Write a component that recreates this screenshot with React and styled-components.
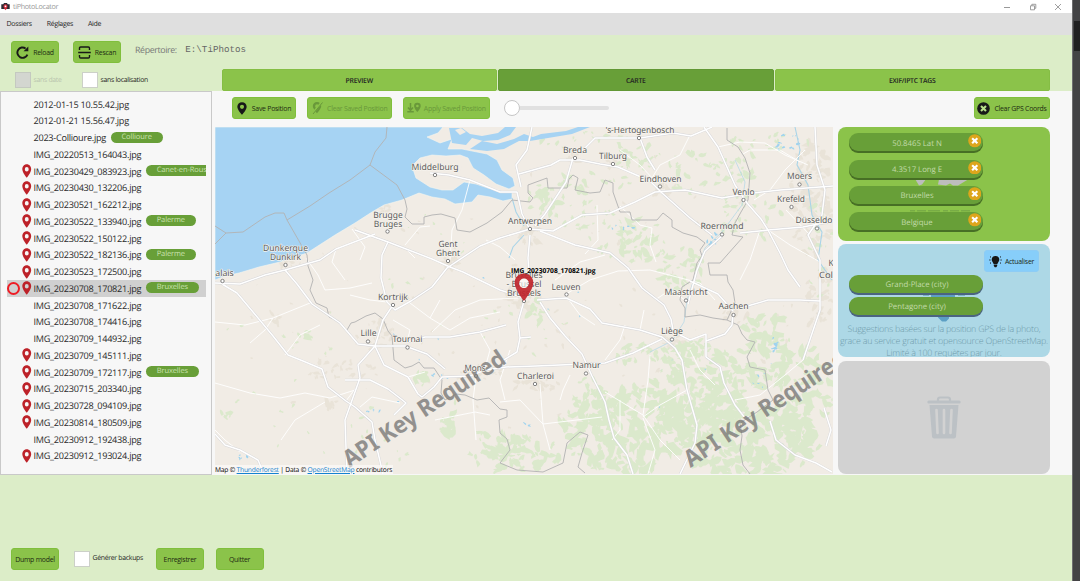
import React from 'react';
import styled, { createGlobalStyle, css } from 'styled-components';

const Global = createGlobalStyle`
  *, *::before, *::after { box-sizing: border-box; }
  html, body { margin: 0; padding: 0; overflow: hidden; }
  body {
    font-family: "Open Sans", "Noto Sans", sans-serif;
    font-size: 7px;
    color: #222;
    text-rendering: geometricPrecision;
  }
  svg { display: block; flex: none; }
`;

const Screen = styled.div`
  display: flex;
  width: 1080px;
  height: 581px;
  background: #dcedc8;
`;
const Window = styled.div`
  display: flex;
  flex-direction: column;
  width: 1072px;
`;
const Gutter = styled.div`
  width: 8px;
  padding-top: 21px;
  background: #434345;
  border-left: 1px solid #6e6e70;
`;
const Thumb = styled.div`
  height: 30px;
  margin-left: 1px;
  background: #202021;
`;

const TitleBar = styled.header`
  display: flex;
  align-items: center;
  height: 13px;
  padding: 0 10px 0 1px;
  background: #fff;
`;
const Title = styled.span`
  margin-left: 3px;
  font-size: 7.2px;
  letter-spacing: -0.32px;
  color: #999;
`;
const WindowControls = styled.div`
  display: flex;
  align-items: center;
  gap: 17.5px;
  margin-left: auto;
`;
const MenuBar = styled.nav`
  display: flex;
  align-items: center;
  gap: 15px;
  height: 22px;
  padding: 1.5px 0 0 6.5px;
  background: #dfdfdf;
  font-size: 7px;
  letter-spacing: -0.32px;
`;

const Header = styled.div`
  display: flex;
  height: 56px;
`;
const HeaderLeft = styled.div`
  width: 221.5px;
  padding: 5.5px 0 0 11px;
`;
const Row = styled.div`
  display: flex;
  align-items: center;
`;
const CheckRow = styled.div`
  display: flex;
  padding: 9px 0 0 3.5px;
`;
const Button = styled.button`
  display: flex;
  align-items: center;
  justify-content: center;
  gap: ${(p) => p.$gap || 4}px;
  flex: none;
  width: ${(p) => p.$w}px;
  height: 22.5px;
  padding: 1px 0 0;
  border: 1px solid ${(p) => (p.$blue ? '#8dccf5' : '#80bf3c')};
  border-radius: 3px;
  background: ${(p) => (p.$blue ? '#87cefa' : '#8bc34a')};
  color: ${(p) => (p.$off ? '#69983a' : '#1d2a12')};
  font: inherit;
  font-size: 6.9px;
  letter-spacing: -0.24px;
  white-space: nowrap;
`;
const Directory = styled.span`
  margin: -4px 8.5px 0 14px;
  font-size: 8.8px;
  letter-spacing: -0.36px;
  color: #777;
`;
const Path = styled.span`
  margin-top: -5px;
  font: 9.2px "Liberation Mono", monospace;
  color: #666;
  white-space: nowrap;
`;
const Check = styled.label`
  display: flex;
  align-items: center;
  gap: 3px;
  width: ${(p) => p.$w}px;
  font-size: 6.9px;
  letter-spacing: -0.3px;
  color: ${(p) => (p.$off ? '#b9c4ae' : '#222')};
  white-space: nowrap;
  &::before {
    content: '';
    width: 16px;
    height: 16px;
    border: 1px solid ${(p) => (p.$off ? '#c4c9c0' : '#ccd0c8')};
    background: ${(p) => (p.$off ? '#d3d6d0' : '#fff')};
  }
`;
const Tabs = styled.div`
  display: flex;
  align-items: flex-end;
  gap: 1px;
  width: 828.5px;
`;
const Tab = styled.div`
  display: flex;
  align-items: center;
  justify-content: center;
  flex: 1;
  height: 22.5px;
  padding-top: 1px;
  border-radius: 2px;
  background: ${(p) => (p.$active ? '#689f38' : '#8bc34a')};
  border: 1px solid ${(p) => (p.$active ? '#629835' : '#85be44')};
  font-size: 6.8px;
  letter-spacing: -0.22px;
  font-weight: 600;
`;

const Body = styled.main`
  display: flex;
  height: 384px;
  background: #f7f7f7;
`;
const FileList = styled.ul`
  width: 212px;
  margin: 0;
  padding: 3.8px 5.5px 0 6px;
  border: 1px solid #c9c9c9;
  list-style: none;
`;
const FileRow = styled.li`
  display: flex;
  align-items: center;
  height: 16.75px;
  overflow: hidden;
  font-size: 9.15px;
  letter-spacing: -0.26px;
  white-space: nowrap;
  color: #2a2a2a;
  ${(p) => p.$selected && css`background: #d0d0d0;`}
`;
const Slot = styled.span`
  display: flex;
  justify-content: center;
  flex: none;
  width: ${(p) => p.$w}px;
`;
const Ring = styled.span`
  width: 13px;
  height: 13px;
  border: 2px solid #ee1c24;
  border-radius: 50%;
`;
const Badge = styled.span`
  flex: none;
  height: 11px;
  margin: -1px 0 0 4.8px;
  padding: 0 10.7px;
  border-radius: 6px;
  background: #689f38;
  color: #cbe2b0;
  font-size: 7.5px;
  line-height: 11px;
  letter-spacing: -0.1px;
`;

const Content = styled.section`
  display: flex;
  flex-direction: column;
  width: 838px;
  padding-left: 3px;
`;
const Toolbar = styled.div`
  display: flex;
  align-items: center;
  height: 36px;
  padding: 0 0 2.5px 17px;
`;
const Spacer = styled.div`
  width: ${(p) => p.$w}px;
  flex: none;
`;
const Slider = styled.div`
  display: flex;
  align-items: center;
  width: 105px;
  margin: 0 auto 0 14px;
`;
const Knob = styled.div`
  width: 16px;
  height: 16px;
  border: 1px solid #c6c6c6;
  border-radius: 50%;
  background: #fff;
`;
const Track = styled.div`
  flex: 1;
  height: 4px;
  border-radius: 0 2px 2px 0;
  background: #e1e1e1;
`;
const Panes = styled.div`
  display: flex;
  gap: 5px;
`;
const MapPane = styled.div`
  position: relative;
  width: 618px;
  height: 347px;
  overflow: hidden;
`;
const Attribution = styled.div`
  position: absolute;
  left: 0;
  bottom: 0;
  width: 178px;
  height: 9px;
  background: rgba(255, 255, 255, 0.55);
  color: #000;
  font-size: 6.7px;
  line-height: 10.5px;
  letter-spacing: -0.21px;
  white-space: nowrap;
  u { color: #1583cf; }
`;

const Side = styled.aside`
  display: flex;
  flex-direction: column;
  gap: 3.4px;
  width: 212px;
  padding-top: 0.4px;
`;
const Card = styled.div`
  position: relative;
  display: flex;
  flex-direction: column;
  align-items: flex-start;
  height: 113.3px;
  padding: ${(p) => p.$pad || '0'};
  overflow: hidden;
  border-radius: 8px;
  background: ${(p) => p.$bg};
`;
const Backdrop = styled.div`
  position: absolute;
  left: 0;
  top: 0;
`;
const Suggest = styled.div`
  width: 100%;
  padding-left: 11px;
`;
const SuggestTop = styled.div`
  display: flex;
  justify-content: flex-end;
  padding: 0 11px 2.5px 0;
`;
const Chip = styled.div`
  position: relative;
  display: flex;
  align-items: center;
  justify-content: center;
  flex: none;
  width: 134px;
  height: 18px;
  padding: 2.5px 0 0 2px;
  margin-bottom: ${(p) => p.$mb}px;
  border-radius: 9px;
  background: #689f38;
  box-shadow: 0 2px 0 ${(p) => p.$shade};
  color: #c2dbaa;
  font-size: 7.8px;
  letter-spacing: -0.03px;
`;
const Close = styled.span`
  position: absolute;
  right: 2px;
  top: 1px;
`;
const Hint = styled.p`
  width: 212px;
  margin: 4px 0 0;
  text-align: center;
  font-size: 8.9px;
  font-weight: 300;
  line-height: 12px;
  letter-spacing: -0.24px;
  color: #6f9bab;
  white-space: nowrap;
`;
const Footer = styled.footer`
  display: flex;
  align-items: center;
  height: 106px;
  padding: 61.5px 0 0 11px;
`;

const PIN = 'M12 1C7 1 3.6 4.7 3.6 9.2 3.6 15 12 23.5 12 23.5S20.4 15 20.4 9.2C20.4 4.7 17 1 12 1Zm0 4.6a3.7 3.7 0 1 1 0 7.4 3.7 3.7 0 0 1 0-7.4Z';
const Pin = ({ w = 12, h = 13, color = '#181818' }) => (
  <svg width={w} height={h} viewBox="3 0.5 18 23.5" preserveAspectRatio="none">
    <path fill={color} fillRule="evenodd" d={PIN} />
  </svg>
);
const ReloadIcon = () => (
  <svg width="13" height="13" viewBox="0 0 13 13" fill="none" stroke="#181818" strokeWidth="1.9">
    <path d="M11.4 8.6A5.2 5.2 0 1 1 9.6 2.4" />
    <path d="M7.6 5.2h4.700V.6Z" fill="#181818" stroke="none" />
  </svg>
);
const RescanIcon = () => (
  <svg width="13" height="13" viewBox="0 0 13 13" fill="none" stroke="#181818" strokeWidth="1.4">
    <path d="M1.500 4V2.200Q1.500 1 2.700 1h7.600q1.200 0 1.200 1.200V4M1.500 9v1.800q0 1.200 1.200 1.200h7.600q1.200 0 1.200-1.200V9M.2 6.500h12.600" />
  </svg>
);
const PinOff = () => (
  <svg width="12" height="14" viewBox="0 0 24 26">
    <path fill="#69983a" fillRule="evenodd" d={PIN} />
    <path d="M22 1 3 24" stroke="#8bc34a" strokeWidth="4" />
    <path d="M23 2 4 25" stroke="#69983a" strokeWidth="2" />
  </svg>
);
const ApplyIcon = () => (
  <svg width="14" height="12" viewBox="0 0 14 12">
    <path d="M3.5 1v7M1 5.500l2.500 2.800L6 5.500M.3 9.800h6.500" fill="none" stroke="#69983a" strokeWidth="1.5" />
    <path fillRule="evenodd" fill="#69983a" d="M10.400.8A3.200 3.200 0 0 0 7.100 4c0 2.500 3.300 6 3.300 6s3.300-3.500 3.300-6A3.200 3.200 0 0 0 10.400.8Zm0 1.900a1.300 1.300 0 1 1 0 2.600 1.300 1.300 0 0 1 0-2.600Z" />
  </svg>
);
const Cross = ({ size, bg, fg, w }) => (
  <svg width={size} height={size} viewBox="0 0 14 14">
    <circle cx="7" cy="7" r="6.8" fill={bg} />
    <path d="m4.300 4.300 5.400 5.400m0-5.400L4.300 9.700" stroke={fg} strokeWidth={w} />
  </svg>
);
const Bulb = () => (
  <svg width="13" height="13" viewBox="0 0 13 13">
    <path fill="#161616" d="M6.500 1a3.800 3.800 0 0 0-3.800 3.800c0 1.700 1.300 2.400 1.900 4.200h3.800c.6-1.800 1.900-2.500 1.900-4.200A3.800 3.800 0 0 0 6.500 1ZM4.800 9.500h3.400v1.400l-1 1.300H5.800l-1-1.300Z" />
    <path d="M.3 5h1.200m10 0h1.200M1 1.600l1 .7m10-.7-1 .7M1 8.400l1-.7m10 .7-1-.7" stroke="#161616" />
  </svg>
);
const CameraIcon = () => (
  <svg width="9" height="9" viewBox="0 0 9 9">
    <path d="M.3 2.300h2L3 1h3l.7 1.300h2V7H.3Z" fill="#2b2b33" />
    <path d="M4.500 2.300a2 2 0 0 0-2 2c0 1.700 2 4 2 4s2-2.300 2-4a2 2 0 0 0-2-2Z" fill="#d52b3b" />
    <circle cx="4.5" cy="4.3" r=".9" fill="#fff" />
  </svg>
);

const files = [
  ['2012-01-15 10.55.42.jpg'],
  ['2012-01-21 15.56.47.jpg'],
  ['2023-Collioure.jpg', 0, 'Collioure'],
  ['IMG_20220513_164043.jpg'],
  ['IMG_20230429_083923.jpg', 1, 'Canet-en-Roussillon'],
  ['IMG_20230430_132206.jpg', 1],
  ['IMG_20230521_162212.jpg', 1],
  ['IMG_20230522_133940.jpg', 1, 'Palerme'],
  ['IMG_20230522_150122.jpg', 1],
  ['IMG_20230522_182136.jpg', 1, 'Palerme'],
  ['IMG_20230523_172500.jpg', 1],
  ['IMG_20230708_170821.jpg', 1, 'Bruxelles', 1],
  ['IMG_20230708_171622.jpg'],
  ['IMG_20230708_174416.jpg'],
  ['IMG_20230709_144932.jpg'],
  ['IMG_20230709_145111.jpg', 1],
  ['IMG_20230709_172117.jpg', 1, 'Bruxelles'],
  ['IMG_20230715_203340.jpg', 1],
  ['IMG_20230728_094109.jpg', 1],
  ['IMG_20230814_180509.jpg', 1],
  ['IMG_20230912_192438.jpg'],
  ['IMG_20230912_193024.jpg', 1],
];

/* ---- Map drawing ---- */
const random = (seed) => () => {
  seed = (seed * 16807) % 2147483647;
  return seed / 2147483647;
};
const blobs = (groups, seed) => {
  const r = random(seed);
  let d = '';
  groups.forEach(([cx, cy, rx, ry, n, s]) => {
    for (let i = 0; i < n; i += 1) {
      const a = r() * 6.283;
      const q = Math.sqrt(r());
      const x = cx + Math.cos(a) * q * rx;
      const y = cy + Math.sin(a) * q * ry;
      const size = s * (0.35 + r());
      const tilt = r() * 3.14;
      for (let k = 0; k < 9; k += 1) {
        const t = (k / 9) * 6.283;
        const m = size * (0.5 + r() * 0.8);
        const u = Math.cos(t) * m * 1.5;
        const v = Math.sin(t) * m * 0.75;
        d += `${k ? 'L' : 'M'}${(x + u * Math.cos(tilt) - v * Math.sin(tilt)).toFixed(1)} ${(y + u * Math.sin(tilt) + v * Math.cos(tilt)).toFixed(1)}`;
      }
      d += 'Z';
    }
  });
  return d;
};
const woods = blobs([
  [545, 200, 20, 16, 26, 3], [590, 183, 40, 12, 22, 2.6], [578, 215, 40, 14, 20, 2.6], [640, 158, 25, 14, 22, 2.8],
  [700, 172, 34, 24, 30, 2.8], [590, 140, 50, 9, 16, 2.2], [642, 240, 24, 24, 34, 3.4], [680, 268, 24, 22, 34, 3],
  [610, 238, 30, 20, 18, 2.2], [742, 165, 12, 38, 24, 2.6], [765, 215, 30, 26, 16, 2.4], [770, 140, 40, 12, 14, 2],
  [730, 215, 16, 20, 16, 2.6], [625, 430, 64, 44, 210, 4.4], [700, 390, 46, 50, 190, 4.2], [750, 440, 70, 38, 190, 4.4],
  [765, 350, 26, 38, 80, 3.8], [805, 395, 28, 50, 80, 3.6], [660, 355, 50, 12, 40, 2.8], [590, 400, 20, 24, 26, 3],
  [525, 455, 34, 18, 56, 3.6], [450, 423, 9, 12, 14, 4], [423, 379, 8, 6, 12, 3.2], [536, 312, 8, 14, 10, 3],
  [490, 450, 26, 22, 20, 3], [820, 250, 14, 60, 16, 2.4], [300, 340, 80, 30, 8, 1.8], [350, 420, 130, 50, 22, 1.8],
  [400, 250, 80, 40, 10, 1.5], [500, 330, 70, 30, 16, 1.8], [225, 418, 10, 6, 5, 3], [305, 335, 6, 5, 4, 3.2],
], 77);
const towns = blobs([
  [524, 296, 17, 14, 40, 3], [530, 234, 12, 10, 20, 3], [378, 335, 14, 16, 24, 2.6], [448, 262, 10, 7, 14, 2.4],
  [535, 384, 26, 7, 22, 2.6], [672, 341, 14, 8, 16, 2.6], [812, 200, 22, 60, 80, 3.2], [340, 370, 40, 10, 22, 2.6],
  [475, 372, 30, 8, 18, 2.2], [820, 300, 14, 36, 30, 3], [734, 316, 12, 8, 12, 2.6], [660, 190, 10, 6, 12, 2.6],
  [332, 405, 5, 6, 8, 3], [273, 318, 8, 6, 8, 2.4], [384, 207, 6, 6, 8, 2], [600, 300, 210, 150, 60, 1.7],
  [400, 330, 170, 110, 50, 1.5], [613, 163, 8, 4, 8, 2.4], [575, 158, 6, 5, 8, 2.4], [285, 262, 16, 4, 14, 2.2],
], 31);
const ponds = blobs([
  [712, 240, 8, 7, 8, 1.3], [785, 140, 14, 12, 14, 1.2], [773, 345, 5, 8, 6, 1.7], [622, 227, 14, 3, 6, 1],
  [527, 424, 3, 3, 3, 1.8], [373, 411, 8, 2, 5, 0.9], [440, 373, 16, 6, 6, 1], [760, 380, 14, 8, 5, 0.9],
  [242, 457, 8, 3, 5, 1.1], [560, 340, 220, 120, 14, 0.7],
], 9);

const sea = 'M215 127H443L438 133 427 137 440 143 452 139 448 149 462 149 472 151 487 154 497 160 502 170 513 178 515 186 509 189 496 184 484 175 473 168 468 158 460 155 446 156 432 155 420 158 412 166 416 178 430 187 442 190 453 190 464 182 476 184 488 188 502 191 512 192 512 199 503 201 490 197 478 195 472 202 455 204 445 199 432 197 419 193 402 200 384 205 372 212 355 223 335 235 307 253 280 262 259 267 239 273 225 276 215 280Z';
const channels = 'M449 128 462 128 470 134 482 136 498 133 505 127H516L510 135 498 140 483 141 472 138 466 145 452 143ZM470 149 482 141 497 144 514 139 524 134 533 137 541 134 566 131 578 127H590L572 134 548 138 530 141 519 141 504 149 487 151Z';
const borders = [
  'M387 127 386 138 375 152 370 165 350 180 329 193 310 206 287 220 307 255 308 266 313 280 310 290 316 303 327 308 329 317 338 321 347 330 351 323 355 322 366 316 375 313 383 319 388 331 392 336 394 360 405 368 412 366 419 362 424 368 434 368 442 380 441 393 445 400 456 394 465 395 477 400 489 398 500 409 507 410 507 417 499 420 500 433 507 439 510 450 500 463 517 470 543 472 563 463 567 443 580 432 588 435 582 453 578 467 585 473',
  'M215 226 226 233 243 232 265 217 275 213 284 213 287 220M215 244 226 233',
  'M370 165 397 185 405 200 407 209 405 217 412 224 424 224 424 217 432 215 441 214 455 218 457 230 470 232 487 223 502 212 512 200 530 202 533 198 528 193 528 185 547 178 548 188 567 188 569 179 573 175 578 178 575 190 590 193 600 192 605 180 613 183 613 192 620 212 630 212 632 220 657 220 663 213 672 220 672 227 683 233 697 237 705 243 700 250 702 256 697 263 693 280 682 287 680 300 685 308 685 317 700 315 713 318 727 320 738 325 742 334 747 340 755 342 747 357 750 367 765 370 768 390 773 400 757 412 740 423 742 436 740 450 743 465 750 474',
  'M727 128 727 140 738 147 745 158 750 173 748 200 741 212 735 223 732 235 743 237 735 246 720 263 708 263 710 275 727 275 728 282 733 290 735 303 727 320',
];
const motorways = [
  'M215 283 240 284 265 275 285 270 320 260 336 249 375 234 M285 270 297 284 312 304 340 323 358 344 375 346 M222 284 237 293 253 312 273 336 288 355 303 361 322 369 328 387 346 401 355 407 372 422 375 440 383 474',
  'M355 230 388 242 432 259 450 267 463 272 500 290 524 298M388 242 382 255 381 278 387 302 395 310 411 301 432 287 447 268 480 246 500 238 530 229 553 231 582 215 610 213 635 202 655 192 685 190 722 198 745 194 780 190 833 186',
  'M347 474 345 420 351 403 360 378 358 365 375 346 383 320 393 305M345 380 370 380 388 389 401 399 406 403 394 415 M375 346 384 365 408 377 418 394 422 397 434 387 442 377 470 376 485 370 506 367 536 366 583 364 605 363 633 353 662 339',
  'M375 346 405 346 427 354 445 369M407 342 425 337 450 337 480 332 506 325',
  'M524 301 518 322 520 338 517 352 502 361M520 338 531 337M540 302 550 318 565 336 582 354 592 376 605 402 609 420 614 438 627 455 633 474',
  'M540 231 575 245 610 253 628 268 642 288 664 305 671 319 674 335M530 235 528 258 529 275M537 300 566 298 590 309 602 323 640 330 662 337 675 348 682 360 687 390 697 425 695 443 680 474',
  'M430 173 449 175 470 180 500 192 517 192 522 214 530 230M532 127 527 150 516 165 521 187M519 174 551 165 560 160 580 160 600 164 618 167 650 181 662 193 690 218 712 235M573 158 566 182 545 214 535 226M640 138 647 157 655 170M580 153 595 138 640 138 673 133 691 136 712 127',
  'M704 127 718 147 735 185 747 203 761 219 768 230 780 253 788 270 800 287M722 236 705 251 697 270 688 304M690 281 718 294 733 311M706 334 690 340 680 335M706 334 706 357 720 367 724 383 735 405 745 418M733 315 732 325 725 334 706 341',
  'M815 127 817 165 825 190 822 215 808 235 820 260 820 310 803 360M770 421 776 440 795 455 816 463 832 472M740 233 768 230 803 227 833 221M820 301 800 300 768 300 744 307 M824 408 831 430 826 446',
  'M215 434 225 445 240 450 258 460 264 474',
];
const roads = [
  'M215 383 250 393 280 398 305 393 330 398 355 390 M215 322 245 325 273 318 310 303M281 440 295 420 325 402M273 318 265 330 250 343M215 430 225 440 240 452',
  'M306 258 318 275 325 290 350 288 372 283M352 229 365 247 360 260 M336 249 332 262 345 280M405 245 420 227 430 226M388 242 405 248 415 258',
  'M432 332 455 310 480 300 518 298M470 180 462 210 452 230 450 260M486 240 500 247 515 260M410 303 430 318 450 330 470 318 500 312',
  'M620 206 640 225 652 228 650 245 656 262M597 205 598 240 585 254M555 280 580 262 605 255M566 294 590 280 618 271 650 270 700 283M566 296 580 315 595 325',
  'M650 355 648 380 643 415 660 440 680 460M605 392 643 415M643 417 660 405 687 390M540 384 543 424 550 450M500 402 520 400 543 424 602 417M648 474 655 450 643 418',
  'M644 310 640 330M700 283 715 300M655 300 670 290 688 302M754 200 770 190 785 170 805 150M786 210 810 235M760 230 750 260 740 280 M735 400 760 395 785 375 803 360',
  'M435 420 475 412 490 415M476 377 473 400 476 440M510 350 500 380 505 400M570 375 563 390 560 400M605 360 620 340 625 325M690 350 700 370 715 385 M620 400 620 430 612 440',
  'M743 154 750 150 780 150 800 162M650 181 660 165 680 155 690 135M655 181 640 165 620 150M718 147 740 142 765 143 785 155 808 165M768 230 790 245 820 262',
  'M358 385 346 401M387 302 370 300 350 295M408 377 425 372M360 407 372 397 400 403M285 355 300 335 320 325M393 320 410 330 407 342M440 300 430 318M480 332 490 350 485 368',
];
const labels = [
  ['Breda', 575, 152.5, 24], ['Tilburg', 613, 158.5, 28], ["'s-Hertogenbosch", 640, 133, 69], ['Eindhoven', 660.5, 181.5, 42],
  ['Moers', 799.5, 179, 25], ['Venlo', 743.5, 195, 22], ['Krefeld', 791, 202, 28], ['Roermond', 722, 229, 43],
  ['Antwerpen', 530, 223.5, 44], ['Gent', 448, 247, 19], ['Ghent', 448, 256, 24], ['Leuven', 566, 289.5, 29],
  ['Maastricht', 686, 294.5, 43], ['Aachen', 733.5, 309, 30], ['Bruxelles', 524, 278, 37], ['- Brussel', 524, 287, 35],
  ['Brussels', 524, 295.5, 34], ['Middelburg', 435, 169.5, 47], ['Brugge', 388, 217.5, 29.5], ['Bruges', 388, 226.5, 28.5],
  ['Dunkerque', 285.5, 251, 45], ['Dunkirk', 285.5, 260, 31], ['alais', 224.5, 275.5, 18.5], ['Kortrijk', 393, 299.5, 30],
  ['Lille', 368.5, 336, 16], ['Tournai', 407.5, 341.5, 30], ['Mons', 475, 371, 21], ['Charleroi', 535.5, 378.5, 37],
  ['Namur', 586.5, 368, 28], ['Liège', 672, 334, 22], ['Düsseldo', 814, 223, 37], ['K', 831, 266, 5], ['Col', 826, 277.5, 14],
];
const dots = [
  [575, 158], [613, 164], [639, 138], [660, 186.5], [799.5, 184.5], [743.5, 200], [791.5, 207], [817, 228.5], [722, 234.5],
  [530, 229], [448, 261], [566.5, 294.5], [686, 300.5], [733.5, 315], [524, 301], [435, 175], [387.5, 231.5], [285.5, 265],
  [222.5, 281], [393, 305], [368, 341.5], [407.5, 347.5], [476, 376], [535, 384], [586, 373.5], [672, 339.5],
];
const MapLabel = styled.text`
  font: 8.7px "Noto Sans", sans-serif;
  fill: #5c5c5c;
  stroke: #f7f4ee;
  stroke-width: 1.3px;
  stroke-linejoin: round;
  paint-order: stroke;
  text-anchor: middle;
`;
const Watermark = styled.text`
  font: bold 23.5px "Noto Sans", sans-serif;
  fill: #7e7d7b;
  opacity: 0.82;
`;
const PinLabel = styled.text`
  font: bold 6.8px "Open Sans", sans-serif;
  fill: #000;
`;

const MapDrawing = () => (
  <svg width="618" height="347" viewBox="215 127 618 347">
    <rect x="215" y="127" width="618" height="347" fill="#f1ece5" />
    <path d={towns} fill="#e9e3d8" />
    <path d={woods} fill="#dbe9cc" />
    <path d={sea} fill="#a6d3f3" stroke="#f8f6ef" strokeWidth=".6" />
    <path d={channels} fill="#a6d3f3" />
    <path d="M462 166 470 164 476 171 470 176 458 176ZM455 130 461 128 466 132 460 135Z" fill="#f1ece5" />
    <path d={ponds} fill="#9fd3ef" />
    <g fill="none" stroke="#a9d4e8" strokeWidth="1.1">
      <path d="M512 198 516 212 524 226M524 235 513 247 509 258" />
      <path d="M795 127 800 150 797 165 808 185 812 215 822 232 818 260 832 280" />
      <path d="M735 160 745 182 742 205 722 232 705 248 697 270 687 300 684 322 672 341 650 352" strokeWidth=".8" opacity=".8" />
    </g>
    <g fill="none" stroke="#fff" strokeWidth=".9" strokeLinejoin="round">
      {roads.map((d) => <path key={d} d={d} />)}
    </g>
    <g fill="none" stroke="#b2b2b2" strokeWidth=".9" strokeLinejoin="round">
      {borders.map((d) => <path key={d} d={d} />)}
    </g>
    <g fill="none" stroke="#d6d6d9" strokeWidth="2.4" strokeLinejoin="round">
      {motorways.map((d) => <path key={d} d={d} />)}
    </g>
    <g fill="none" stroke="#fff" strokeWidth="1.5" strokeLinejoin="round">
      {motorways.map((d) => <path key={d} d={d} />)}
    </g>
    <g fill="#fff" stroke="#666" strokeWidth=".8">
      {dots.map(([x, y]) => <circle key={`${x}-${y}`} cx={x} cy={y} r="1.7" />)}
    </g>
    {[349.5, 690.5].map((x) => (
      <Watermark key={x} transform={`translate(${x} 468) rotate(-33.7)`} textLength="190" lengthAdjust="spacingAndGlyphs">API Key Required</Watermark>
    ))}
    {labels.map(([t, x, y, w]) => (
      <MapLabel key={t} x={x} y={y} textLength={w} lengthAdjust="spacingAndGlyphs">{t}</MapLabel>
    ))}
    <path fill="#c1272d" fillRule="evenodd" opacity=".93" d="M524 273.5c-5.600 0-9.300 4.100-9.300 9.200 0 6.700 9.300 18.300 9.300 18.300s9.300-11.600 9.300-18.300c0-5.100-3.700-9.200-9.300-9.200Zm0 5a4.800 4.800 0 1 1 0 9.600 4.800 4.800 0 0 1 0-9.600Z" />
    <circle cx="524" cy="283.3" r="4.6" fill="#fff" opacity=".6" />
    <PinLabel x="511" y="273" textLength="84.5" lengthAdjust="spacingAndGlyphs">IMG_20230708_170821.jpg</PinLabel>
  </svg>
);

export default function App() {
  return (
    <Screen>
      <Global />
      <Window>
        <TitleBar>
          <CameraIcon />
          <Title>tiPhotoLocator</Title>
          <WindowControls>
            <svg width="8" height="8" viewBox="0 0 8 8"><path d="M1 4.500h6" stroke="#999" /></svg>
            <svg width="8" height="8" viewBox="0 0 8 8" fill="none" stroke="#888" strokeWidth=".8"><path d="M1.500 2.800h4v4h-4zM2.800 2.800V1.300h4v4H5.500" /></svg>
            <svg width="8" height="8" viewBox="0 0 8 8"><path d="m1 1 6 6m0-6L1 7" stroke="#888" strokeWidth=".8" /></svg>
          </WindowControls>
        </TitleBar>
        <MenuBar>
          <span>Dossiers</span>
          <span>Réglages</span>
          <span>Aide</span>
        </MenuBar>
        <Header>
          <HeaderLeft>
            <Row>
              <Button $w={48}><ReloadIcon />Reload</Button>
              <Spacer $w={14} />
              <Button $w={48}><RescanIcon />Rescan</Button>
              <Directory>Répertoire:</Directory>
              <Path>E:\TiPhotos</Path>
            </Row>
            <CheckRow>
              <Check $w={67} $off>sans date</Check>
              <Check $w={80}>sans localisation</Check>
            </CheckRow>
          </HeaderLeft>
          <Tabs>
            <Tab>PREVIEW</Tab>
            <Tab $active>CARTE</Tab>
            <Tab>EXIF/IPTC TAGS</Tab>
          </Tabs>
        </Header>
        <Body>
          <FileList>
            {files.map(([name, pin, place, selected]) => (
              <FileRow key={name} $selected={selected}>
                <Slot $w={13}>{selected && <Ring />}</Slot>
                <Slot $w={13.5}>{!!pin && <Pin w={9.5} h={14} color="#bd2229" />}</Slot>
                {name}
                {place && <Badge>{place}</Badge>}
              </FileRow>
            ))}
          </FileList>
          <Content>
            <Toolbar>
              <Button $w={64} $gap={5}><Pin w={10} h={13} />Save Position</Button>
              <Spacer $w={11} />
              <Button $w={84.5} $off><PinOff />Clear Saved Position</Button>
              <Spacer $w={11} />
              <Button $w={87.5} $gap={3} $off><ApplyIcon />Apply Saved Position</Button>
              <Slider><Knob /><Track /></Slider>
              <Button $w={76}><Cross size={13} bg="#181818" fg="#b9e08a" w={2.2} />Clear GPS Coords</Button>
            </Toolbar>
            <Panes>
              <MapPane>
                <MapDrawing />
                <Attribution>Map © <u>Thunderforest</u> | Data © <u>OpenStreetMap</u> contributors</Attribution>
              </MapPane>
              <Side>
                <Card $bg="#8bc34a" $pad="6px 0 0 11px">
                  <Backdrop>
                    <svg width="212" height="113" viewBox="838 127.5 212 113">
                      <path fill="#bdbdbd" d="M914 176h13l-2 5-3 4-3 1-3-5ZM939 180l5-4h26l-2 4-5 3-5 3h-5l-3-2-4 2-8-1Z" />
                      <path stroke="#6a9a45" strokeWidth=".8" strokeDasharray="5 2 9 2 12 3" d="M910 211.300h60" />
                    </svg>
                  </Backdrop>
                  {['50.8465 Lat N', '4.3517 Long E', 'Bruxelles', 'Belgique'].map((t) => (
                    <Chip key={t} $mb={8.3} $shade="#476f25">
                      {t}
                      <Close><Cross size={13.5} bg="#dda61c" fg="#fff" w={2.2} /></Close>
                    </Chip>
                  ))}
                </Card>
                <Card $bg="#add8e6" $pad="5.5px 0 0 0">
                  <Backdrop>
                    <svg width="212" height="113" viewBox="838 244.5 212 113">
                      <path fill="#5c9fc4" d="M931 292h24v6h-24ZM938 314h11v5l-3 3h-4l-4-4Z" />
                      <path stroke="#6aa6bd" strokeWidth="1.5" d="M923 295.500h6M958 295.500h7" />
                    </svg>
                  </Backdrop>
                  <Suggest>
                    <SuggestTop><Button $blue $w={55} $gap={3}><Bulb />Actualiser</Button></SuggestTop>
                    <Chip $mb={4.4} $shade="#4b6480">Grand-Place (city)</Chip>
                    <Chip $mb={4.4} $shade="#4b6480">Pentagone (city)</Chip>
                  </Suggest>
                  <Hint>
                    Suggestions basées sur la position GPS de la photo,<br />
                    grace au service gratuit et opensource OpenStreetMap.<br />
                    Limité à 100 requètes par jour.
                  </Hint>
                </Card>
                <Card $bg="#d2d2d2" $pad="35px 0 0 88.5px">
                  <svg width="34" height="43" viewBox="0 0 34 43">
                    <path d="M11 5V3.600Q11 1.500 13.200 1.500h7.600Q23 1.500 23 3.600V5" fill="none" stroke="#bcc1c5" strokeWidth="2.2" />
                    <rect x="0.3" y="4.6" width="33.4" height="3" rx="1.5" fill="#bcc1c5" />
                    <path d="M2.500 9h29L29 40.500q-.2 2-2.200 2H7.200q-2 0-2.200-2Z" fill="#bcc1c5" />
                    <path d="m9.500 14 1 23M17 14v23M24.500 14l-1 23" stroke="#d2d2d2" strokeWidth="2.6" strokeLinecap="round" />
                  </svg>
                </Card>
              </Side>
            </Panes>
          </Content>
        </Body>
        <Footer>
          <Button $w={48}>Dump model</Button>
          <Spacer $w={14.5} />
          <Check $w={82.5}>Générer backups</Check>
          <Button $w={48}>Enregistrer</Button>
          <Spacer $w={11.5} />
          <Button $w={48}>Quitter</Button>
        </Footer>
      </Window>
      <Gutter><Thumb /></Gutter>
    </Screen>
  );
}
